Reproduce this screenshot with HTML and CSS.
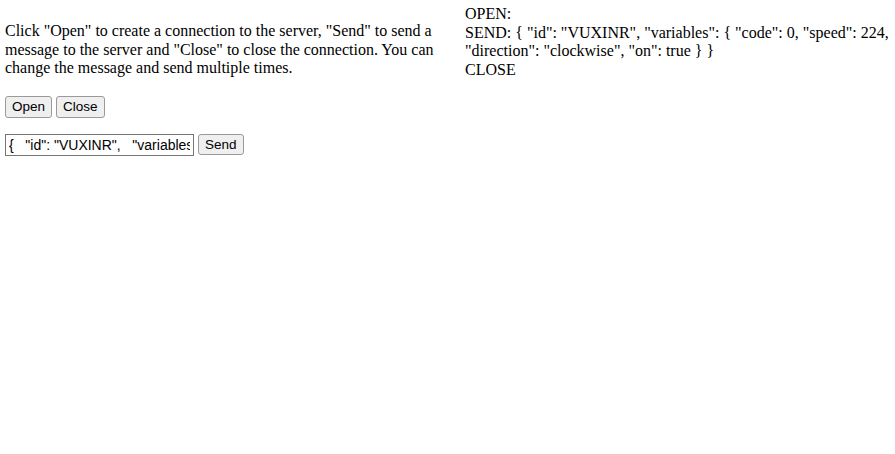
FILE: index.html
```html
<!DOCTYPE html>
<html>
<head>
<meta charset="utf-8">
<link rel="stylesheet" href="styles.css">
</head>
<body>
<div class="layout">
  <div class="col-left">
    <p class="intro">Click "Open" to create a connection to the server, "Send" to send a message to the server and "Close" to close the connection. You can change the message and send multiple times.</p>
    <form class="controls">
      <div class="row row-top">
        <button type="button" class="btn">Open</button>
        <button type="button" class="btn">Close</button>
      </div>
      <div class="row row-send">
        <input class="msg" type="text" value='{   "id": "VUXINR",   "variables": {     "code": 0,     "speed": 224,     "direction": "clockwise",     "on": true   } }'>
        <button type="button" class="btn">Send</button>
      </div>
    </form>
  </div>
  <div class="col-right">
    <div class="output">
      <div>OPEN:</div>
      <div>SEND: { "id": "VUXINR", "variables": { "code": 0, "speed": 224, "direction": "clockwise", "on": true } }</div>
      <div>CLOSE</div>
    </div>
  </div>
</div>
</body>
</html>
```
FILE: styles.css
```css
html, body {
  margin: 0;
  padding: 0;
  background: #ffffff;
}
body {
  font-family: "Liberation Serif", "Times New Roman", serif;
  font-size: 16px;
  color: #000;
}
.layout {
  display: flex;
  padding-top: 5px;
}
.col-left {
  width: 450px;
  padding-left: 5px;
  flex: none;
}
.col-right {
  flex: 1;
  padding-left: 10px;
  padding-right: 4px;
}
.intro {
  margin: 17px 0 0 0;
  line-height: 18.5px;
}
.controls {
  margin: 0;
}
.row {
  display: flex;
  align-items: center;
  gap: 4px;
}
.row-top {
  margin-top: 18px;
}
.row-send {
  margin-top: 16px;
}
.btn {
  font-family: "Liberation Sans", Arial, sans-serif;
  font-size: 13.5px;
  height: 22px;
  padding: 0 6px;
  background: #efefef;
  border: 1px solid #9a9a9a;
  border-radius: 3px;
  color: #000;
  margin: 0;
}
.row-send .btn {
  height: 21px;
}
.msg {
  box-sizing: border-box;
  width: 189px;
  height: 22px;
  margin: 0;
  padding: 1px 3px;
  font-family: "Liberation Sans", Arial, sans-serif;
  font-size: 14px;
  border: 1px solid #767676;
  border-radius: 0;
  color: #000;
}
.output {
  line-height: 18.7px;
}
```
